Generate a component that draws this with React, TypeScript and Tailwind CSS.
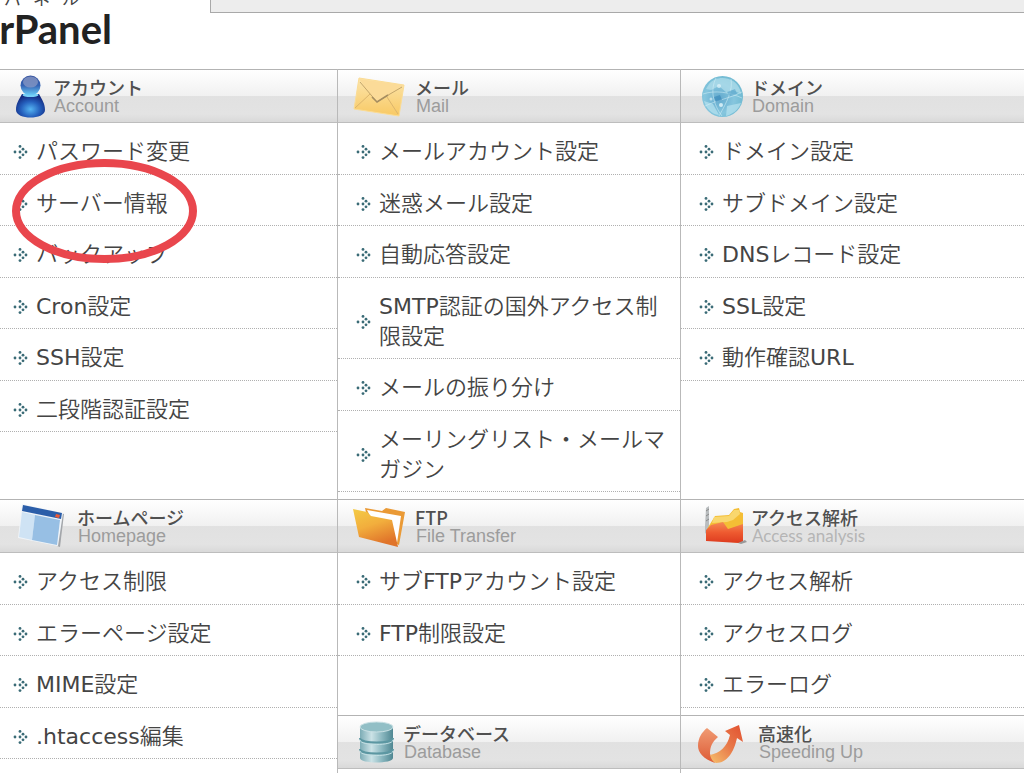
import React from 'react';

type IconProps = { className?: string };

const AccountIcon: React.FC<IconProps> = ({ className }) => (
  <svg className={className} width="53" height="52" viewBox="0 0 53 52" aria-hidden="true">
    <defs>
      <radialGradient id="acc-body" cx="0.5" cy="0.65" r="0.6">
        <stop offset="0" stopColor="#55b4f2" />
        <stop offset="0.55" stopColor="#2560bd" />
        <stop offset="1" stopColor="#142a80" />
      </radialGradient>
      <linearGradient id="acc-head" x1="0" y1="0" x2="0" y2="1">
        <stop offset="0" stopColor="#37539f" />
        <stop offset="0.5" stopColor="#3564b4" />
        <stop offset="1" stopColor="#6cd0fa" />
      </linearGradient>
    </defs>
    <path d="M22 24C19 30 16 33 16 40C16 50 45 50 45 40C45 33 42 30 39 24Z" fill="url(#acc-body)" />
    <ellipse cx="30.500" cy="25" rx="8" ry="2" fill="#79d2f7" />
    <circle cx="30.500" cy="15.500" r="10" fill="url(#acc-head)" />
    <ellipse cx="30.500" cy="12" rx="7.500" ry="5.500" fill="#8a9ac4" opacity="0.75" />
  </svg>
);

const MailIcon: React.FC<IconProps> = ({ className }) => (
  <svg className={className} width="77" height="52" viewBox="0 0 77 52" aria-hidden="true">
    <defs>
      <linearGradient id="mail-bg" x1="0" y1="0" x2="0" y2="1">
        <stop offset="0" stopColor="#fce5ac" />
        <stop offset="1" stopColor="#f8c964" />
      </linearGradient>
    </defs>
    <path d="M21 8L66 15L61 46L16 39Z" fill="url(#mail-bg)" stroke="#fbdc94" strokeWidth="1" strokeLinejoin="round" />
    <path d="M17 38L32 24M60 44L49 27" stroke="#dcb56c" strokeWidth="1" fill="none" />
    <path d="M21 9L39 32L65 15Z" fill="#fbdb98" />
    <path d="M22 12L39 32L52 24L64 17" fill="none" stroke="#c3a56b" strokeWidth="1" />
    <path d="M34 27L39 32L50 25" fill="none" stroke="#a58d60" strokeWidth="1.500" />
  </svg>
);

const DomainIcon: React.FC<IconProps> = ({ className }) => (
  <svg className={className} width="70" height="52" viewBox="0 0 70 52" aria-hidden="true">
    <defs>
      <radialGradient id="globe" cx="0.42" cy="0.55" r="0.6">
        <stop offset="0" stopColor="#62a9cd" />
        <stop offset="0.6" stopColor="#86c6de" />
        <stop offset="1" stopColor="#6fb9d1" />
      </radialGradient>
    </defs>
    <circle cx="41.500" cy="26.500" r="20.500" fill="url(#globe)" />
    <path d="M28 14C33 7 45 6 52 11C57 14 60 20 60 24L52 20L46 23L38 16L30 20L25 19Z" fill="#b2deeb" opacity="0.7" />
    <path d="M23 31L32 34L38 45C30 44 25 38 23 31ZM46 36L60 33C57 40 52 44 45 46Z" fill="#b4e0ed" opacity="0.75" />
    <path d="M22 24C34 20 48 22 61 28M24 36C36 30 50 28 61 22M35 8C29 20 32 34 41 46M50 9C52 20 46 32 38 46" fill="none" stroke="#d8f1f8" strokeWidth="1" opacity="0.5" />
    <path d="M33 27L39 25L41 30L35 32Z" fill="#3585b8" opacity="0.6" />
    <path d="M46 22L54 19L56 24L49 26Z" fill="#5aa5cb" opacity="0.6" />
    <circle cx="40" cy="35" r="2" fill="#e6f7fb" opacity="0.8" />
    <circle cx="38" cy="16" r="2" fill="#e6f7fb" opacity="0.7" />
    <circle cx="30" cy="29" r="1.500" fill="#e6f7fb" opacity="0.6" />
  </svg>
);

const HomepageIcon: React.FC<IconProps> = ({ className }) => (
  <svg className={className} width="77" height="52" viewBox="0 0 77 52" aria-hidden="true">
    <path d="M61 13L64 14L60 47L57 46Z" fill="#a3a6aa" />
    <path d="M22 4L63 13L58 46L18 38Z" fill="#f0f4f8" />
    <path d="M23 5L62 13L61 19L22 11Z" fill="#2b5ea9" />
    <path d="M22 12L35 15L32 40L19 37Z" fill="#cfe3f4" />
    <path d="M35 15L60 20L57 45L32 40Z" fill="#97bfe4" />
    <path d="M56 14L60 15L59 18L55 17Z" fill="#ee5a35" />
  </svg>
);

const FolderIcon: React.FC<IconProps> = ({ className }) => (
  <svg className={className} width="77" height="52" viewBox="0 0 77 52" aria-hidden="true">
    <defs>
      <linearGradient id="folder" x1="0" y1="0" x2="0.4" y2="1">
        <stop offset="0" stopColor="#f4cb45" />
        <stop offset="0.5" stopColor="#f2ae3d" />
        <stop offset="1" stopColor="#e0742a" />
      </linearGradient>
    </defs>
    <path d="M27 8L44 11L48 8L67 12L61 45L32 30Z" fill="#ea9a36" />
    <path d="M29 10L63 16L59 43L36 24Z" fill="#fff" />
    <path d="M15 9L29 12L33 16L54 20L60 47L21 37Z" fill="url(#folder)" />
  </svg>
);

const AnalysisIcon: React.FC<IconProps> = ({ className }) => (
  <svg className={className} width="70" height="52" viewBox="0 0 70 52" aria-hidden="true">
    <defs>
      <linearGradient id="chart-red" x1="0" y1="0" x2="0" y2="1">
        <stop offset="0" stopColor="#f58a55" />
        <stop offset="0.5" stopColor="#ee5a30" />
        <stop offset="1" stopColor="#dd3b1f" />
      </linearGradient>
    </defs>
    <path d="M25 8L28 6V28L24 34V26Z" fill="#b9bdbf" />
    <path d="M25 11L28 9M25 16L28 14M25 21L28 19" stroke="#8a8a8a" strokeWidth="1" />
    <path d="M26 29L34 16L48 15L53 9L58 8L59 12L62 13V43L26 40Z" fill="#f4be35" />
    <path d="M33 17L48 16L53 10L58 10L59 14L52 20L46 22L31 23Z" fill="#f9d76e" />
    <path d="M25 30L30 25L42 22L47 29L62 24L62 42L58 43L25 41Z" fill="url(#chart-red)" />
    <path d="M57 43L64 40L66 42L60 44Z" fill="#999" />
  </svg>
);

const DatabaseIcon: React.FC<IconProps> = ({ className }) => (
  <svg className={className} width="65" height="52" viewBox="0 0 65 52" aria-hidden="true">
    <defs>
      <linearGradient id="db" x1="0" y1="0" x2="1" y2="0">
        <stop offset="0" stopColor="#7cacb5" />
        <stop offset="0.35" stopColor="#cbe2e6" />
        <stop offset="0.65" stopColor="#8ebac2" />
        <stop offset="1" stopColor="#4f8792" />
      </linearGradient>
    </defs>
    <path d="M22 11V42C22 48 55 48 55 42V11Z" fill="url(#db)" />
    <path d="M22 22C22 28 55 28 55 22M22 33C22 39 55 39 55 33" fill="none" stroke="#5c97a2" strokeWidth="2" />
    <path d="M22 24C22 30 55 30 55 24M22 35C22 41 55 41 55 35" fill="none" stroke="#c2dfe3" strokeWidth="1" />
    <ellipse cx="38.500" cy="11" rx="16.500" ry="5" fill="#92bfc6" stroke="#c9e0e4" strokeWidth="1" />
  </svg>
);

const SpeedIcon: React.FC<IconProps> = ({ className }) => (
  <svg className={className} width="77" height="52" viewBox="0 0 77 52" aria-hidden="true">
    <defs>
      <linearGradient id="spd-l" x1="0" y1="0" x2="0" y2="1">
        <stop offset="0" stopColor="#f09b73" />
        <stop offset="1" stopColor="#dd5a35" />
      </linearGradient>
      <linearGradient id="spd-r" x1="1" y1="0" x2="0" y2="1">
        <stop offset="0" stopColor="#e2502f" />
        <stop offset="0.5" stopColor="#e87a4a" />
        <stop offset="1" stopColor="#f6c06c" />
      </linearGradient>
    </defs>
    <path d="M26 12L37 21C31 26 29 31 29 38L34 47C22 43 17 36 17 30C17 22 21 16 26 12Z" fill="url(#spd-l)" />
    <path d="M58 9L62 26L56 22C53 36 46 47 35 47C32 46 30 43 29 39C39 37 46 31 49 19L44 15Z" fill="url(#spd-r)" />
  </svg>
);

const ArrowDots: React.FC = () => (
  <svg className="shrink-0" width="16" height="16" viewBox="0 0 16 16" fill="#3a6b76" aria-hidden="true">
    <circle cx="2" cy="8" r="1.400" />
    <circle cx="7" cy="8" r="1.400" />
    <circle cx="7" cy="2.400" r="1.400" />
    <circle cx="10" cy="5.200" r="1.400" />
    <circle cx="13" cy="8" r="1.400" />
    <circle cx="10" cy="10.800" r="1.400" />
    <circle cx="7" cy="13.600" r="1.400" />
  </svg>
);

interface PanelSection {
  title: string;
  subtitle: string;
  subtitleClass?: string;
  icon: React.FC<IconProps>;
  items: string[];
  className?: string;
  itemClass?: string;
}

const sections: PanelSection[] = [
  {
    title: 'アカウント',
    subtitle: 'Account',
    icon: AccountIcon,
    items: ['パスワード変更', 'サーバー情報', 'バックアップ', 'Cron設定', 'SSH設定', '二段階認証設定'],
    itemClass: 'pl-[13px]',
  },
  {
    title: 'メール',
    subtitle: 'Mail',
    icon: MailIcon,
    items: [
      'メールアカウント設定',
      '迷惑メール設定',
      '自動応答設定',
      'SMTP認証の国外アクセス制限設定',
      'メールの振り分け',
      'メーリングリスト・メールマガジン',
    ],
    className: 'border-l',
  },
  {
    title: 'ドメイン',
    subtitle: 'Domain',
    icon: DomainIcon,
    items: ['ドメイン設定', 'サブドメイン設定', 'DNSレコード設定', 'SSL設定', '動作確認URL'],
    className: 'border-l',
  },
  {
    title: 'ホームページ',
    subtitle: 'Homepage',
    icon: HomepageIcon,
    items: ['アクセス制限', 'エラーページ設定', 'MIME設定', '.htaccess編集'],
    className: 'row-span-2',
    itemClass: 'pl-[13px]',
  },
  {
    title: 'FTP',
    subtitle: 'File Transfer',
    icon: FolderIcon,
    items: ['サブFTPアカウント設定', 'FTP制限設定'],
    className: 'border-l',
  },
  {
    title: 'アクセス解析',
    subtitle: 'Access analysis',
    subtitleClass: "font-['Lato',sans-serif] text-[17px] text-[#b5b5b5]",
    icon: AnalysisIcon,
    items: ['アクセス解析', 'アクセスログ', 'エラーログ'],
    className: 'border-l',
  },
  {
    title: 'データベース',
    subtitle: 'Database',
    icon: DatabaseIcon,
    items: [],
    className: 'border-l',
  },
  {
    title: '高速化',
    subtitle: 'Speeding Up',
    icon: SpeedIcon,
    items: [],
    className: 'border-l',
  },
];

const Section: React.FC<{ section: PanelSection }> = ({ section }) => {
  const Icon = section.icon;

  return (
    <section className={`border-[#b9b9b9] pb-[7px] ${section.className ?? ''}`}>
      <header className="flex items-center border-t border-b border-t-[#b3b3b3] border-b-[#bdbdbd] bg-[linear-gradient(to_bottom,#ffffff_0%,#f1f1f1_49%,#e1e1e1_51%,#e3e3e3_85%,#d9d9d9_100%)]">
        <Icon className="shrink-0" />
        <div>
          <h2 className="font-['Noto_Sans_CJK_JP',sans-serif] text-[18px] leading-5 font-medium text-[#505050]">
            {section.title}
          </h2>
          <p className={`pl-px leading-[18px] ${section.subtitleClass ?? "font-['Liberation_Sans',sans-serif] text-[18px] text-[#9c9c9c]"}`}>
            {section.subtitle}
          </p>
        </div>
      </header>

      <ul>
        {section.items.map((item) => (
          <li key={item} className="border-b border-dotted border-[#b0b0b0]">
            <a
              href="#"
              className={`flex items-center gap-[7px] pt-[14px] pr-3 ${section.itemClass ?? 'pl-[18px]'}`}
            >
              <ArrowDots />
              <span>{item}</span>
            </a>
          </li>
        ))}
      </ul>
    </section>
  );
};

const App: React.FC = () => {
  return (
    <div className="relative flex min-h-screen flex-col overflow-hidden bg-white font-['DejaVu_Sans','Noto_Sans_CJK_JP_DemiLight','Noto_Sans_CJK_JP',sans-serif] text-[22px] leading-[30px] text-[#444444]">
      <div className="flex h-[69px] items-start">
        <div className="flex w-[210px] flex-col overflow-hidden">
          <div className="flex h-[6px] items-end gap-3 pl-1 font-['Noto_Sans_CJK_JP',sans-serif] text-[17px] leading-4">
            <span>パ</span>
            <span>ネ</span>
            <span>ル</span>
          </div>
          <h1 className="flex w-[112px] justify-end font-['Lato',sans-serif] text-[40px] leading-[46px] font-bold text-[#222222]">
            rPanel
          </h1>
        </div>
        <div className="h-[13px] flex-1 border-b border-l border-[#a9a9a9] bg-[#ededed]" />
      </div>

      <main className="grid flex-1 grid-cols-[337fr_343fr_344fr] grid-rows-[auto_auto_1fr] [&_li:nth-child(even)>a]:pb-[6px] [&_li:nth-child(odd)>a]:pb-[7px]">
        {sections.map((section) => (
          <Section key={section.subtitle} section={section} />
        ))}
      </main>

      <svg className="pointer-events-none absolute top-[159px] left-3" width="186" height="106" viewBox="0 0 186 106" aria-hidden="true">
        <ellipse cx="92.500" cy="52" rx="88.500" ry="48" fill="none" stroke="#e9464d" strokeWidth="8" />
      </svg>
    </div>
  );
};

export default App;
